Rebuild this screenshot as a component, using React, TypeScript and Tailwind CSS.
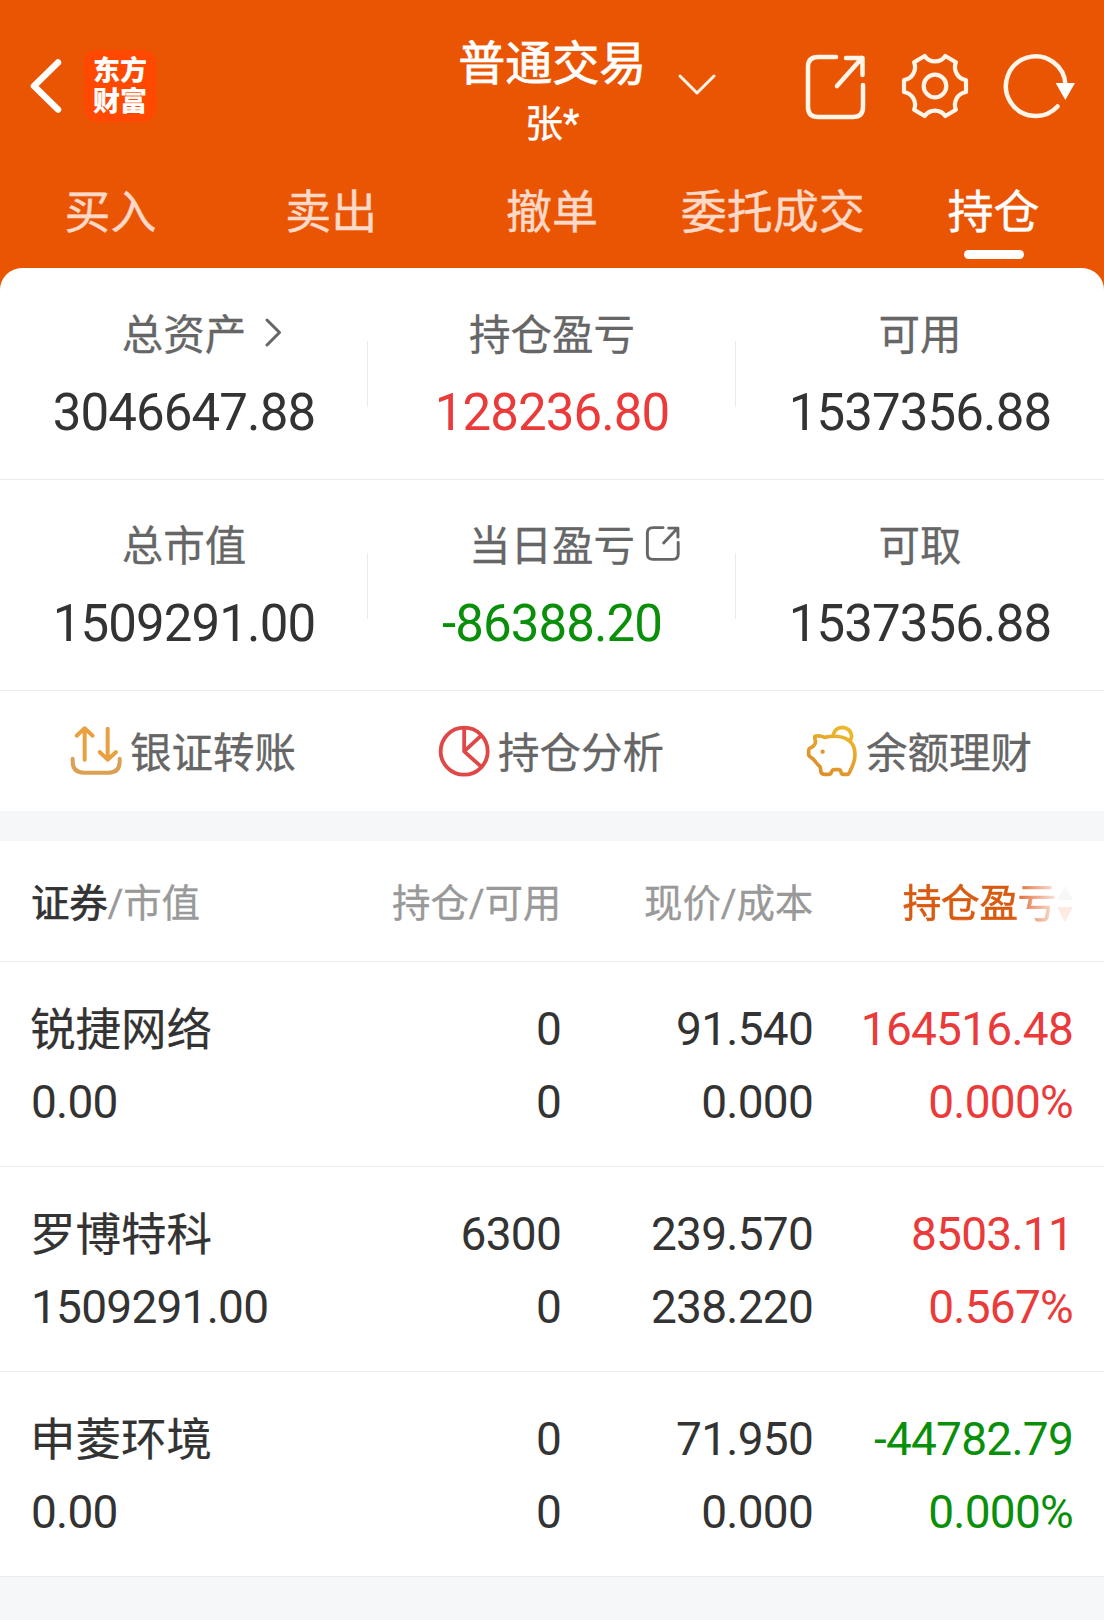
import React from 'react';
import clsx from 'clsx';

const TABS = ['买入', '卖出', '撤单', '委托成交', '持仓'];

const HOLDINGS = [
  {
    name: '锐捷网络',
    marketValue: '0.00',
    position: '0',
    available: '0',
    price: '91.540',
    cost: '0.000',
    profit: '164516.48',
    ratio: '0.000%'
  },
  {
    name: '罗博特科',
    marketValue: '1509291.00',
    position: '6300',
    available: '0',
    price: '239.570',
    cost: '238.220',
    profit: '8503.11',
    ratio: '0.567%'
  },
  {
    name: '申菱环境',
    marketValue: '0.00',
    position: '0',
    available: '0',
    price: '71.950',
    cost: '0.000',
    profit: '-44782.79',
    ratio: '0.000%'
  }
];

const BackIcon = () => (
  <svg width="32" height="56" viewBox="0 0 32 56" fill="none" stroke="#fff" strokeWidth="6.5" strokeLinecap="round" strokeLinejoin="round">
    <path d="M28 4.5 4 28l24 23.5" />
  </svg>
);

const ShareIcon = ({ width, height, stroke, className }: { width: number; height: number; stroke: number; className?: string }) => (
  <svg width={width} height={height} viewBox="0 0 66 66" preserveAspectRatio="none" fill="none" stroke="currentColor" strokeWidth={stroke} strokeLinecap="round" strokeLinejoin="round" className={className}>
    <path d="M34 3H16Q6 3 6 13v40q0 10 10 10h35q10 0 10-10V31" />
    <path d="M35 32 60 4M44 4h16.500v17" />
  </svg>
);

const GearIcon = () => (
  <svg width="68" height="68" viewBox="-34 -34 68 68" fill="none" stroke="#fff5e8" strokeWidth="4.2" strokeLinejoin="round">
    <path d="M31 -6V6A13 13 0 0 0 20.900 23.700L10.300 30A12.500 12.500 0 0 0 -10.300 30L-20.900 23.700A13 13 0 0 0 -31 6V-6A13 13 0 0 0 -20.900 -23.700L-10.300 -30A12.500 12.500 0 0 0 10.300 -30L20.900 -23.700A13 13 0 0 0 31 -6Z" />
    <circle r="11.300" />
  </svg>
);

const RefreshIcon = () => (
  <svg width="72" height="68" viewBox="-33 -34 72 68" fill="none">
    <path d="M21.500 20.500A29.800 29.800 0 1 1 29.500 -1" stroke="#fff5e8" strokeWidth="4.500" strokeLinecap="round" />
    <path d="M19.700 -3H39L29.300 14Z" fill="#fff" />
  </svg>
);

const TransferIcon = () => (
  <svg width="52" height="52" viewBox="88 102 156 156" fill="none" stroke="#e8a040" strokeWidth="12" strokeLinecap="round" strokeLinejoin="round">
    <path d="M96 203v8q0 34 34 34h74q33 0 33-34v-8" stroke="#dca055" />
    <path d="M132 206V114M108 134l24-22 24 22M201 113v92M177 183l24 23 25-23" />
  </svg>
);

const PieIcon = () => (
  <svg width="52" height="52" viewBox="52 103 156 156" fill="none" stroke="#e04848" strokeWidth="11.500" strokeLinejoin="round">
    <circle cx="130.500" cy="181.500" r="70.500" />
    <path d="M130.500 111v71l51-47M130.500 182l51 46" />
  </svg>
);

const PiggyIcon = () => (
  <svg width="52" height="52" viewBox="75 103 156 156" fill="none" stroke="url(#pig)" strokeWidth="11" strokeLinecap="round" strokeLinejoin="round">
    <defs>
      <linearGradient id="pig" gradientUnits="userSpaceOnUse" x1="200" y1="105" x2="110" y2="255">
        <stop offset="0" stopColor="#ecbc2c" />
        <stop offset="1" stopColor="#dc8c2c" />
      </linearGradient>
    </defs>
    <path d="M131 140q-14-7-29-3-2 3 1 11 2 6-2 13-4 8-12 10-6 2-6 8v12q0 6 7 9 8 5 14 14 6 8 13 14 2 3 2 11 1 12 11 12h12q7 0 9-6 3-8 9-8h14q4 0 6 7 1 7 8 7h10q5 0 8-6 2-8 6-14 10-20 10-40 0-30-22-44-25-16-69-7Z" />
    <path d="M157 131q6-20 27-21 26 2 28 28l-4 12" />
    <circle cx="125" cy="183" r="6.500" fill="#e09a2c" stroke="none" />
  </svg>
);

const ACTIONS = [
  { label: '银证转账', icon: <TransferIcon /> },
  { label: '持仓分析', icon: <PieIcon /> },
  { label: '余额理财', icon: <PiggyIcon /> }
];

const SUMMARY = [
  [
    {
      label: '总资产',
      value: '3046647.88',
      icon: (
        <svg width="18" height="30" viewBox="0 0 18 30" fill="none" stroke="#666" strokeWidth="3" strokeLinecap="round" strokeLinejoin="round" className="absolute top-3 left-full ml-[18px]">
          <path d="m3 2 12.500 12.500L3 27" />
        </svg>
      )
    },
    { label: '持仓盈亏', value: '128236.80', color: 'text-[#ea3a3a]' },
    { label: '可用', value: '1537356.88' }
  ],
  [
    { label: '总市值', value: '1509291.00' },
    {
      label: '当日盈亏',
      value: '-86388.20',
      color: 'text-[#0a8f0a]',
      icon: <ShareIcon width={37} height={35} stroke={5.2} className="absolute top-[9px] left-full ml-[9px]" />
    },
    { label: '可取', value: '1537356.88' }
  ]
];

function Header() {
  return (
    <header className="h-[268px] text-white">
      <div className="flex h-[175px]">
        <div className="flex flex-1 items-start pl-[30px]">
          <div className="pt-[58px]">
            <BackIcon />
          </div>
          <div className="mt-[50px] ml-[22px] flex h-[72px] w-[72px] flex-col items-center justify-center rounded-[13px] bg-[#ff4800] pt-px text-[27px] leading-[31px] font-black">
            <span>东方</span>
            <span>财富</span>
          </div>
        </div>
        <div className="relative flex flex-col items-center pt-[34px]">
          <h1 className="text-[47px] leading-[60px] font-normal [-webkit-text-stroke:0.8px]">普通交易</h1>
          <p className="text-[38px] leading-[60px] [-webkit-text-stroke:0.4px]">张*</p>
          <svg width="40" height="24" viewBox="0 0 40 24" fill="none" stroke="#fff5e8" strokeWidth="3" strokeLinecap="round" strokeLinejoin="round" className="absolute top-[73px] left-full ml-[31px]">
            <path d="m3 3 17 17L37 3" />
          </svg>
        </div>
        <div className="flex flex-1 items-start justify-end pt-[52px] pr-[29.500px]">
          <ShareIcon width={66} height={66} stroke={4.5} className="mt-0.5 mr-[33px] text-[#fff5e8]" />
          <GearIcon />
          <div className="ml-[34px]">
            <RefreshIcon />
          </div>
        </div>
      </div>
      <nav className="grid grid-cols-5 text-center text-[46px] leading-[75px] [-webkit-text-stroke:0.4px]">
        {TABS.map((tab) => {
          const active = tab === '持仓';
          return (
            <div key={tab} className={clsx('flex flex-col items-center', active ? 'text-white' : 'text-[#ffd9c8]')}>
              <span>{tab}</span>
              {active && <span className="h-[9px] w-[60px] rounded-full bg-white" />}
            </div>
          );
        })}
      </nav>
    </header>
  );
}

function Summary() {
  return (
    <section className="rounded-t-[22px] bg-white">
      {SUMMARY.map((row, i) => (
        <div key={i} className="grid h-[211.5px] grid-cols-3 border-b border-[#ebebeb]">
          {row.map((item, j) => (
            <div key={item.label} className="relative flex flex-col items-center pt-[37.5px]">
              <div className="relative text-[41.500px] leading-[60px] text-[#666] [-webkit-text-stroke:0.3px]">
                {item.label}
                {item.icon}
              </div>
              <div className={clsx('mt-[14px] text-[51px] leading-[66px] tracking-[-0.9px]', item.color ?? 'text-[#333]')}>{item.value}</div>
              {j < 2 && <i className="absolute top-[73px] right-0 h-[66px] w-px bg-[#ebebeb]" />}
            </div>
          ))}
        </div>
      ))}
      <div className="grid h-[120px] grid-cols-3">
        {ACTIONS.map((action) => (
          <div key={action.label} className="flex items-center justify-center gap-2 pr-[2px] text-[41.500px] text-[#666] [-webkit-text-stroke:0.3px]">
            {action.icon}
            <span className="pt-[6px]">{action.label}</span>
          </div>
        ))}
      </div>
    </section>
  );
}

function Holdings() {
  return (
    <section className="bg-white">
      <div className="grid h-[121px] grid-cols-[300px_230px_252px_260px] items-center border-b border-[#ebebeb] px-[31px] pt-[5px] text-right text-[38.500px] tracking-[-0.2px] text-[#999] [-webkit-text-stroke:0.3px]">
        <div className="text-left">
          <span className="text-[#333] [-webkit-text-stroke:0.7px]">证券</span>/市值
        </div>
        <div>持仓/可用</div>
        <div>现价/成本</div>
        <div className="-mr-px flex items-center justify-end">
          <span className="bg-gradient-to-r from-[#d9590f] from-72% to-[#f8e4da] bg-clip-text text-transparent [-webkit-text-stroke:0.7px_transparent]">持仓盈亏</span>
          <svg width="18" height="36" viewBox="0 0 18 36">
            <path d="M1 14 9 0l8 14Z" fill="#f7f7f7" />
            <path d="M1 21h16L9 36Z" fill="#fdeae2" />
          </svg>
        </div>
      </div>
      {HOLDINGS.map((item) => (
        <div
          key={item.name}
          className="grid h-[205px] grid-cols-[300px_230px_252px_260px] content-center gap-y-[7px] border-b border-[#ebebeb] px-[31px] pt-[2px] text-right text-[46px] leading-[66px] tracking-[-0.75px] text-[#333]"
        >
          <div className="-ml-px pt-[3px] text-left text-[45.500px] leading-[63px] tracking-normal [-webkit-text-stroke:0.2px]">{item.name}</div>
          <div>{item.position}</div>
          <div>{item.price}</div>
          <div className={item.profit.startsWith('-') ? 'text-[#0a8f0a]' : 'text-[#ea3a3a]'}>{item.profit}</div>
          <div className="text-left">{item.marketValue}</div>
          <div>{item.available}</div>
          <div>{item.cost}</div>
          <div className={item.profit.startsWith('-') ? 'text-[#0a8f0a]' : 'text-[#ea3a3a]'}>{item.ratio}</div>
        </div>
      ))}
    </section>
  );
}

export default function App() {
  return (
    <div className="h-[1620px] w-[1104px] overflow-hidden bg-[#f6f7f9] font-['Roboto','Noto_Sans_CJK_SC',sans-serif]">
      <div className="bg-[#ea5504]">
        <Header />
        <Summary />
      </div>
      <div className="h-[30px]" />
      <Holdings />
    </div>
  );
}
